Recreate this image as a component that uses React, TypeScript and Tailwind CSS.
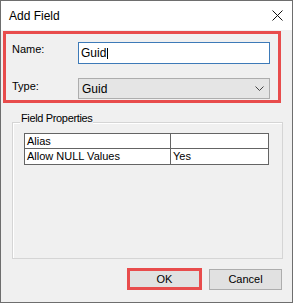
import React from "react";

export default function App() {
  return (
    <div className="w-[293px] h-[303px] bg-[#f0f0f0] border border-[#6e6e6e] flex flex-col font-['Liberation_Sans',Arial,sans-serif] text-[11px] text-black overflow-hidden">
      {/* Title bar */}
      <div className="h-[29px] bg-white flex items-center justify-between pl-[8px] pr-[9px] shrink-0">
        <span className="text-[12px] leading-[14px]">Add Field</span>
        <svg width="11" height="11" viewBox="0 0 11 11" className="block">
          <path d="M0.5 0.5 L10.5 10.5 M10.5 0.5 L0.5 10.5" stroke="#111" strokeWidth="1" fill="none" />
        </svg>
      </div>

      {/* Red highlighted area */}
      <div className="mt-[1px] ml-[2px] w-[278px] h-[72px] border-[3px] border-[#e84c4c] pl-[6px] pt-[8px] flex flex-col shrink-0">
        <div className="flex items-start">
          <div className="w-[66px] mt-[1px] leading-[13px]">Name:</div>
          <div className="w-[192px] h-[22px] bg-white border border-[#3d7ab8] flex items-center pl-[2px] text-[12px] leading-[14px]">
            <span>Guid</span>
            <span className="inline-block w-[1px] h-[11px] bg-black ml-[1px]" />
          </div>
        </div>
        <div className="flex items-start mt-[14px]">
          <div className="w-[66px] mt-[2px] leading-[13px]">Type:</div>
          <div className="w-[192px] h-[21px] bg-[#e5e5e5] border border-[#adadad] flex items-center justify-between pl-[3px] pr-[5px] text-[12px] leading-[14px]">
            <span>Guid</span>
            <svg width="9" height="5" viewBox="0 0 9 5" className="block">
              <path d="M0.5 0.5 L4.5 4.5 L8.5 0.5" stroke="#444" strokeWidth="1" fill="none" />
            </svg>
          </div>
        </div>
      </div>

      {/* Field Properties group */}
      <div className="relative mt-[19px] ml-[11px] w-[271px] h-[137px] border border-[#d5d5d5] shadow-[inset_1px_1px_0_#ffffff] pl-[11px] pt-[10px] shrink-0">
        <span className="absolute left-[7px] top-[-11px] px-[1px] bg-[#f0f0f0] leading-[13px] tracking-[-0.35px]">
          Field Properties
        </span>
        <div className="w-[245px] border border-[#646464] bg-white flex flex-col">
          <div className="flex h-[15px] border-b border-[#646464] leading-[15px]">
            <div className="w-[146px] border-r border-[#646464] pl-[2px]">Alias</div>
            <div className="flex-1 pl-[2px]"></div>
          </div>
          <div className="flex h-[15px] leading-[15px]">
            <div className="w-[146px] border-r border-[#646464] pl-[2px]">Allow NULL Values</div>
            <div className="flex-1 pl-[2px]">Yes</div>
          </div>
        </div>
      </div>

      {/* Buttons */}
      <div className="flex justify-end items-start gap-[7px] pr-[10px] mt-[9px]">
        <div className="w-[75px] h-[22px] border-[3px] border-[#e84c4c] bg-[#e1e1e1] flex items-center justify-center leading-[13px]">
          OK
        </div>
        <div className="w-[73px] h-[21px] mt-[1px] border border-[#adadad] bg-[#e1e1e1] flex items-center justify-center leading-[13px]">
          Cancel
        </div>
      </div>
    </div>
  );
}
